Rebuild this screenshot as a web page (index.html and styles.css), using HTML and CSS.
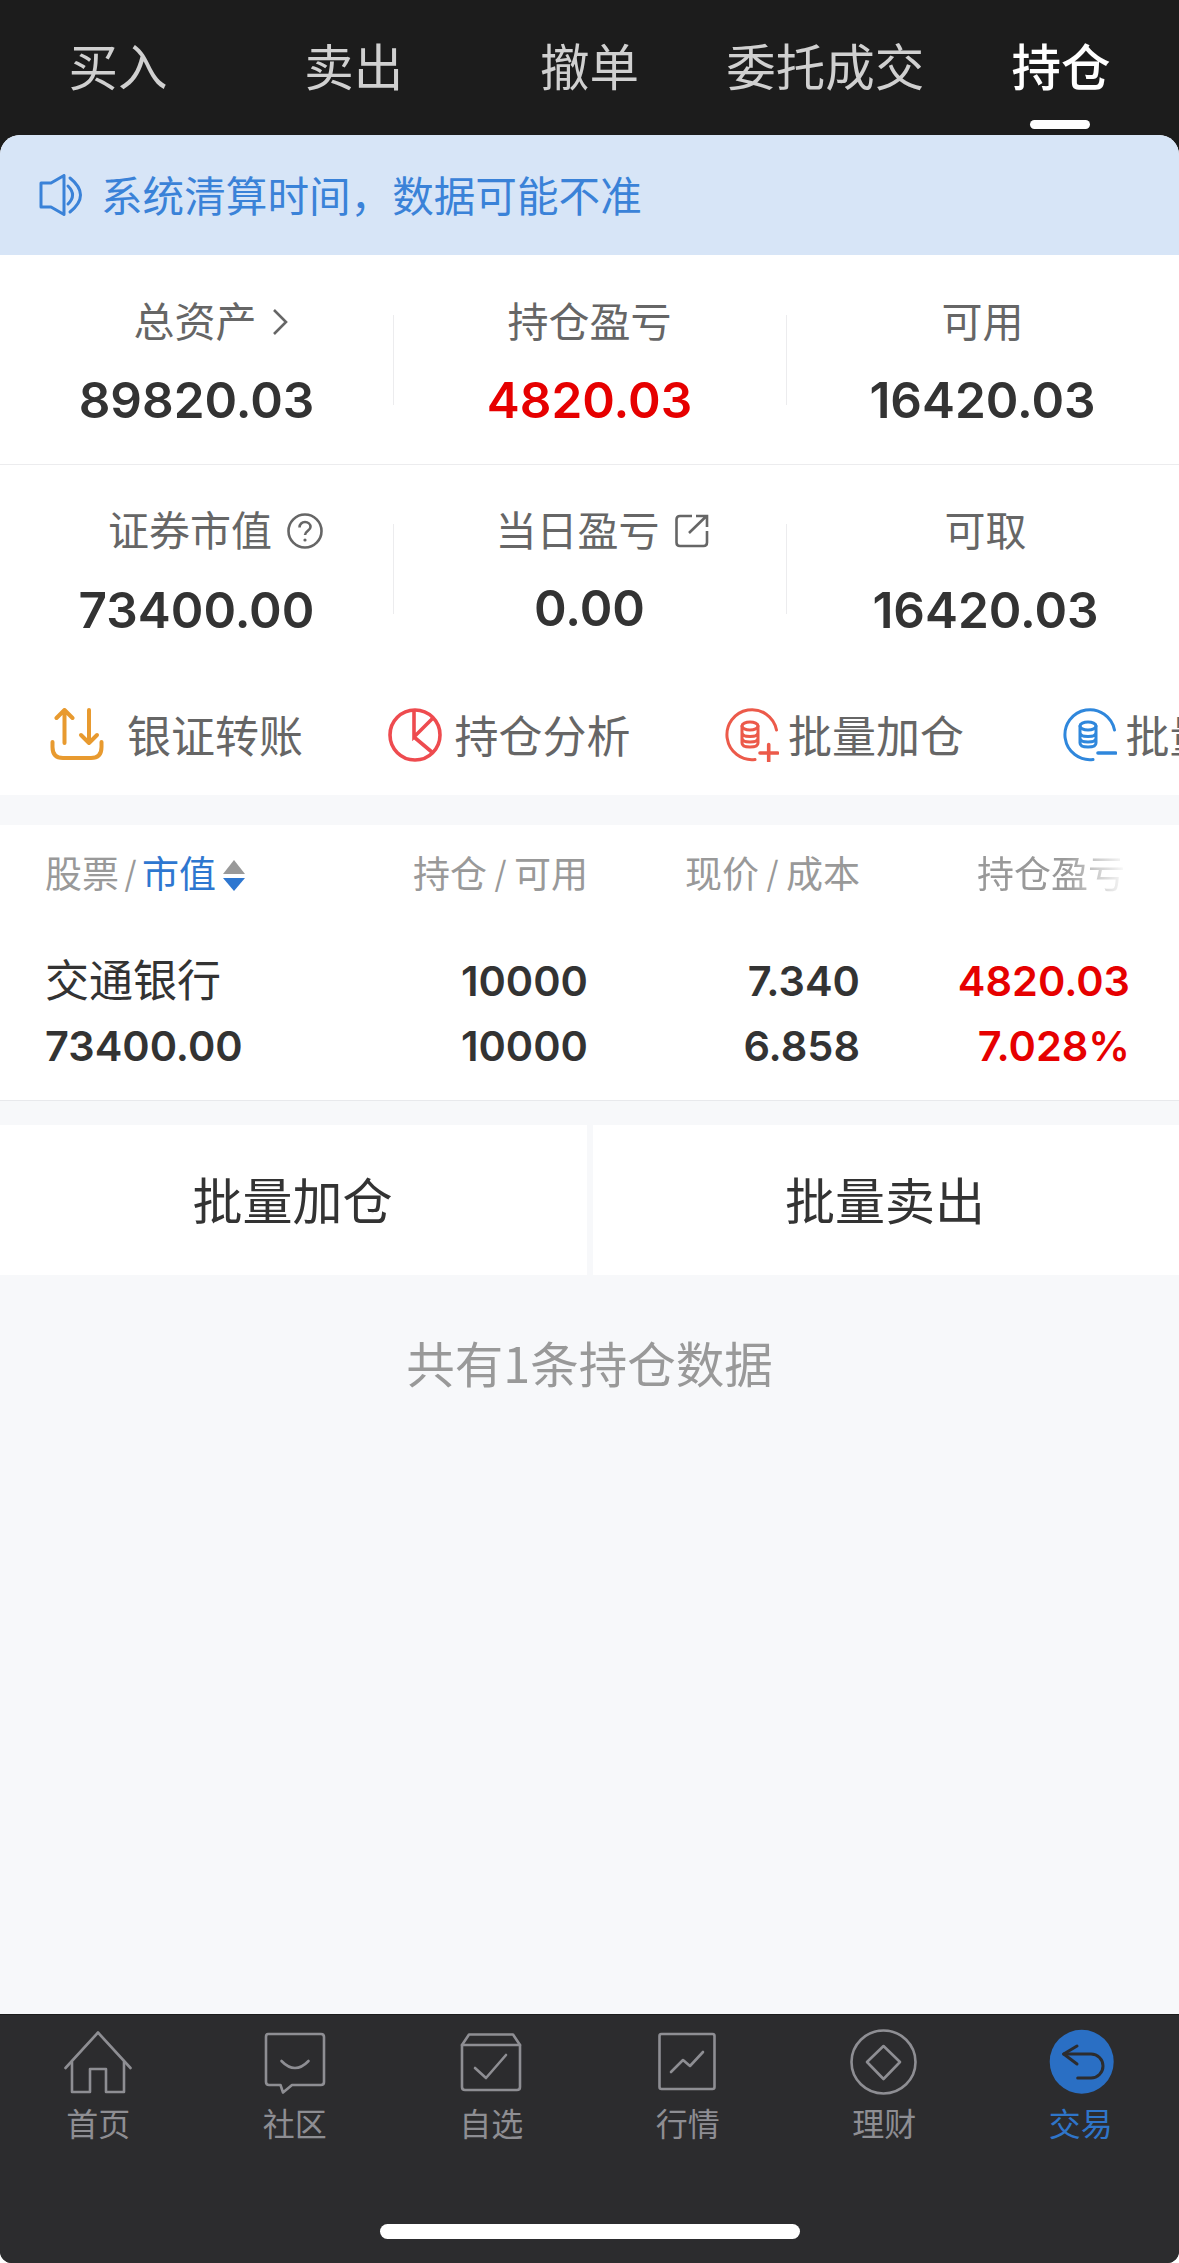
FILE: index.html
```html
<!DOCTYPE html>
<html lang="zh-CN">
<head>
    <meta charset="UTF-8">
    <meta name="viewport" content="width=device-width, initial-scale=1.0">
    <title>持仓</title>
    <link rel="stylesheet" href="styles.css">
</head>
<body>
    <div class="app">
        <nav class="top-tabs">
            <span class="top-tab">买入</span>
            <span class="top-tab">卖出</span>
            <span class="top-tab">撤单</span>
            <span class="top-tab">委托成交</span>
            <span class="top-tab active">持仓</span>
        </nav>

        <main class="content">
            <div class="notice">
                <svg class="notice-icon" viewBox="0 0 44 42" fill="none" stroke="#3a82d8" stroke-width="3" stroke-linejoin="round" stroke-linecap="round">
                    <path d="M2 9H12L25 1.500V40.500L12 33H2Z"/>
                    <path d="M29 12Q38 21 29 30"/>
                    <path d="M31 4Q52 21 31 38"/>
                </svg>
                <span>系统清算时间，数据可能不准</span>
            </div>

            <section class="stats">
                <div class="stat-row">
                    <div class="stat">
                        <div class="stat-label shift-a">总资产
                            <svg class="chev" viewBox="0 0 16 28" fill="none" stroke="#666" stroke-width="2.6"><path d="M2 2L14 14L2 26"/></svg>
                        </div>
                        <div class="stat-value">89820.03</div>
                    </div>
                    <div class="stat">
                        <div class="stat-label">持仓盈亏</div>
                        <div class="stat-value red">4820.03</div>
                    </div>
                    <div class="stat">
                        <div class="stat-label">可用</div>
                        <div class="stat-value">16420.03</div>
                    </div>
                </div>
                <div class="stat-row second">
                    <div class="stat">
                        <div class="stat-label shift-b">证券市值
                            <svg class="help" viewBox="0 0 36 36" fill="none" stroke="#666" stroke-width="2.6">
                                <circle cx="18" cy="18" r="16.500"/>
                                <path d="M12.500 14.500C12.500 11 15 9 18 9C21 9 23.500 11 23.500 14C23.500 17.500 18 18 18 22"/>
                                <circle cx="18" cy="27" r="1.600" fill="#666" stroke="none"/>
                            </svg>
                        </div>
                        <div class="stat-value">73400.00</div>
                    </div>
                    <div class="stat">
                        <div class="stat-label shift-c">当日盈亏
                            <svg class="ext" viewBox="0 0 34 34" fill="none" stroke="#666" stroke-width="2.6">
                                <path d="M17 2H5Q1.500 2 1.500 5.500V28.500Q1.500 32 5 32H28.500Q32 32 32 28.500V17"/>
                                <path d="M14 19L31 2.500M21 2H32V13"/>
                            </svg>
                        </div>
                        <div class="stat-value raised">0.00</div>
                    </div>
                    <div class="stat last-b">
                        <div class="stat-label">可取</div>
                        <div class="stat-value">16420.03</div>
                    </div>
                </div>
            </section>

            <div class="actions">
                <div class="action action-transfer">
                    <svg class="action-icon" viewBox="0 0 54 54" fill="none" stroke="#e89a2f" stroke-width="4" stroke-linecap="round" stroke-linejoin="round">
                        <path d="M14.500 35V2M6.500 10L14.500 2L22.500 10"/>
                        <path d="M39 2V35M31 27L39 35L47 27"/>
                        <path d="M2.500 34V39Q2.500 50 13 50H41Q51.500 50 51.500 39V34"/>
                    </svg>
                    <span>银证转账</span>
                </div>
                <div class="action action-analysis">
                    <svg class="action-icon" viewBox="0 0 54 54" fill="none" stroke="#ee4b4f" stroke-width="3.600">
                        <circle cx="27" cy="27" r="25"/>
                        <path d="M26 3V29L45 10M26 29L45 45"/>
                    </svg>
                    <span>持仓分析</span>
                </div>
                <div class="action action-add">
                    <svg class="action-icon" viewBox="0 0 54 54" fill="none" stroke="#ec5a4a" stroke-width="3" stroke-linecap="round">
                        <path d="M51.500 22A25 25 0 1 0 30 51.500"/>
                        <ellipse cx="25" cy="18" rx="8" ry="4"/>
                        <path d="M17 18V35Q17 39 25 39Q33 39 33 35V18M17 24.500Q17 28.500 25 28.500Q33 28.500 33 24.500M17 30Q17 34 25 34Q33 34 33 30"/>
                        <path d="M35 45H52.500M43.700 36.500V53.500" stroke-width="3.600"/>
                    </svg>
                    <span>批量加仓</span>
                </div>
                <div class="action action-reduce">
                    <svg class="action-icon" viewBox="0 0 54 54" fill="none" stroke="#2f87dc" stroke-width="3" stroke-linecap="round">
                        <path d="M51.500 22A25 25 0 1 0 30 51.500"/>
                        <ellipse cx="25" cy="18" rx="8" ry="4"/>
                        <path d="M17 18V35Q17 39 25 39Q33 39 33 35V18M17 24.500Q17 28.500 25 28.500Q33 28.500 33 24.500M17 30Q17 34 25 34Q33 34 33 30"/>
                        <path d="M35 45H52.500" stroke-width="3.600"/>
                    </svg>
                    <span>批量减仓</span>
                </div>
            </div>

            <section class="holdings">
                <div class="holdings-head">
                    <div class="col-name head-name">股票<span class="slash slash-tight">/</span><span class="sort-key">市值</span><span class="sort-arrows"><i class="arrow-up"></i><i class="arrow-down"></i></span></div>
                    <div class="col-num">持仓<span class="slash">/</span>可用</div>
                    <div class="col-num">现价<span class="slash">/</span>成本</div>
                    <div class="col-num col-fade">持仓盈亏</div>
                </div>
                <div class="holdings-row">
                    <div class="col-name stock-name">交通银行</div>
                    <div class="col-num">10000</div>
                    <div class="col-num">7.340</div>
                    <div class="col-num red">4820.03</div>
                </div>
                <div class="holdings-row">
                    <div class="col-name">73400.00</div>
                    <div class="col-num">10000</div>
                    <div class="col-num">6.858</div>
                    <div class="col-num red">7.028%</div>
                </div>
            </section>

            <div class="batch-btns">
                <div class="batch-btn">批量加仓</div>
                <div class="batch-btn">批量卖出</div>
            </div>

            <p class="count-note">共有1条持仓数据</p>
        </main>

        <nav class="tabbar">
            <div class="tabbar-items">
                <div class="tab">
                    <svg class="tab-icon" viewBox="0 0 68 66" fill="none" stroke="#8e8e93" stroke-width="2.600" stroke-linejoin="round" stroke-linecap="round">
                        <path d="M1.500 39L34 3.500L66.500 39"/>
                        <path d="M8 33V63H26V40H42V63H60V33"/>
                    </svg>
                    <span>首页</span>
                </div>
                <div class="tab">
                    <svg class="tab-icon" viewBox="0 0 68 66" fill="none" stroke="#8e8e93" stroke-width="2.600" stroke-linejoin="round" stroke-linecap="round">
                        <path d="M7 5H60Q63 5 63 8V53Q63 56 60 56H31L22 63.500L19.500 56H8Q5 56 5 53V8Q5 5 7 5Z"/>
                        <path d="M20.500 32Q34 46 47.500 32"/>
                    </svg>
                    <span>社区</span>
                </div>
                <div class="tab">
                    <svg class="tab-icon" viewBox="0 0 68 66" fill="none" stroke="#8e8e93" stroke-width="2.600" stroke-linejoin="round" stroke-linecap="round">
                        <path d="M5 16V58Q5 61 8 61H60Q63 61 63 58V16Z"/>
                        <path d="M5 16L12 5.500H56L63 16"/>
                        <path d="M18 39L29 49L49 26"/>
                    </svg>
                    <span>自选</span>
                </div>
                <div class="tab">
                    <svg class="tab-icon" viewBox="0 0 68 66" fill="none" stroke="#8e8e93" stroke-width="2.600" stroke-linejoin="round" stroke-linecap="round">
                        <rect x="5.500" y="5" width="55" height="55" rx="2"/>
                        <path d="M17 43L29 31L36 37L49 23"/>
                    </svg>
                    <span>行情</span>
                </div>
                <div class="tab">
                    <svg class="tab-icon" viewBox="0 0 68 66" fill="none" stroke="#8e8e93" stroke-width="2.600" stroke-linejoin="round">
                        <ellipse cx="33.500" cy="33" rx="32" ry="31.500"/>
                        <path d="M33.500 17L50 33L33.500 50L17 33Z"/>
                    </svg>
                    <span>理财</span>
                </div>
                <div class="tab tab-active">
                    <svg class="tab-icon" viewBox="0 0 68 66" fill="none" stroke="#2c2c2e" stroke-width="3" stroke-linecap="round" stroke-linejoin="round">
                        <ellipse cx="34.700" cy="32.700" rx="32" ry="32" fill="#2a6fc4" stroke="none"/>
                        <path d="M30 17L16.700 25L30 35"/>
                        <path d="M16.700 25H44A12 12 0 0 1 44 49H30.700"/>
                    </svg>
                    <span>交易</span>
                </div>
            </div>
            <div class="home-bar"></div>
        </nav>
    </div>
</body>
</html>
```
FILE: styles.css
```css
* {
    box-sizing: border-box;
}
html, body {
    margin: 0;
    background: #fff;
}
body {
    font-family: Inter, "Noto Sans CJK SC", sans-serif;
    color: #333;
}
.app {
    width: 1179px;
    height: 2263px;
    display: flex;
    flex-direction: column;
    overflow: hidden;
    background: #1c1c1c;
    border-radius: 0 0 12px 12px;
}
.red {
    color: #e60000;
}

/* top tabs */
.top-tabs {
    display: flex;
    height: 135px;
    padding-top: 32px;
    background: #1c1c1c;
    flex: none;
}
.top-tab {
    flex: 1;
    height: 103px;
    text-align: center;
    font-size: 49.500px;
    line-height: 72px;
    color: #d0d0d0;
    position: relative;
}
.top-tab.active {
    color: #fff;
    font-weight: 500;
}
.top-tab.active::after {
    content: "";
    position: absolute;
    left: 87px;
    bottom: 6px;
    width: 60px;
    height: 9px;
    border-radius: 5px;
    background: #fff;
}

.content {
    flex: 1;
    display: flex;
    flex-direction: column;
    background: #f7f8fa;
    border-radius: 20px 20px 0 0;
    overflow: hidden;
}

/* notice */
.notice {
    height: 120px;
    flex: none;
    display: flex;
    align-items: center;
    gap: 18px;
    padding-left: 39px;
    background: #d7e5f7;
    color: #3a82d8;
    font-size: 41.600px;
}
.notice span {
    margin-bottom: 3px;
}
.notice-icon {
    width: 44px;
    height: 42px;
}

/* stats */
.stats {
    background: #fff;
    flex: none;
}
.stat-row {
    display: grid;
    grid-template-columns: repeat(3, 393px);
    height: 210px;
    padding-top: 39px;
    border-bottom: 1px solid #ececee;
}
.stat-row.second {
    height: 210px;
    padding-top: 38px;
    border-bottom: none;
}
.stat {
    position: relative;
    text-align: center;
}
.stat + .stat::before {
    content: "";
    position: absolute;
    left: 0;
    top: 21px;
    width: 1px;
    height: 90px;
    background: #ececee;
}
.last-b {
    padding-left: 6px;
}
.stat-label {
    display: flex;
    justify-content: center;
    align-items: center;
    gap: 15px;
    height: 56px;
    font-size: 41px;
    line-height: 56px;
    color: #666;
}
.stat-value {
    margin-top: 20px;
    font-size: 49.500px;
    line-height: 60px;
    font-weight: 600;
}
.second .stat-value {
    margin-top: 21px;
}
.second .stat-value.raised {
    margin-top: 19px;
}
.shift-a {
    padding-left: 28px;
}
.shift-b {
    padding-left: 38px;
}
.shift-c {
    padding-left: 25px;
}
.chev {
    width: 16px;
    height: 28px;
}
.help {
    width: 36px;
    height: 36px;
}
.ext {
    width: 34px;
    height: 34px;
}

/* actions row */
.actions {
    display: flex;
    align-items: center;
    height: 120px;
    flex: none;
    padding-left: 50px;
    margin-bottom: 30px;
    background: #fff;
    font-size: 44px;
    color: #666;
    white-space: nowrap;
    overflow: hidden;
}
.action {
    display: flex;
    align-items: center;
    flex: none;
    width: 337.500px;
}
.action span {
    margin-bottom: 3px;
}
.action-icon {
    width: 54px;
    height: 54px;
    flex: none;
}
.action-transfer {
    gap: 23px;
}
.action-analysis {
    gap: 13px;
}
.action-add,
.action-reduce {
    gap: 9px;
}

/* holdings table */
.holdings {
    flex: none;
    height: 276px;
    padding: 25px 0 0 45px;
    background: #fff;
    border-bottom: 1px solid #e8e9ec;
}
.holdings-head,
.holdings-row {
    display: grid;
    grid-template-columns: 300px 243px 272px 270px;
    white-space: nowrap;
}
.holdings-head {
    height: 50px;
    margin-bottom: 49px;
    font-size: 37px;
    line-height: 50px;
    color: #999;
}
.holdings-row {
    height: 65px;
    font-size: 41.500px;
    line-height: 65px;
    font-weight: 600;
}
.col-num {
    text-align: right;
}
.head-name {
    display: flex;
    align-items: center;
}
.stock-name {
    font-size: 44px;
    font-weight: 400;
}
.slash {
    margin: 0 7px;
    font-weight: 300;
}
.slash-tight {
    margin: 0 5px;
}
.sort-key {
    color: #2e77d0;
}
.sort-arrows {
    display: flex;
    flex-direction: column;
    gap: 4px;
    margin-left: 7px;
}
.arrow-up {
    border: 11px solid transparent;
    border-top: 0;
    border-bottom: 14px solid #999;
}
.arrow-down {
    border: 11px solid transparent;
    border-bottom: 0;
    border-top: 13px solid #2e77d0;
}
.col-fade {
    padding-right: 5px;
    -webkit-mask-image: linear-gradient(90deg, #000 205px, transparent 268px);
    mask-image: linear-gradient(90deg, #000 205px, transparent 268px);
}

/* batch buttons */
.batch-btns {
    display: grid;
    grid-template-columns: 587px 586px;
    gap: 6px;
    margin-top: 24px;
    flex: none;
}
.batch-btn {
    height: 150px;
    padding-right: 2px;
    background: #fff;
    text-align: center;
    font-size: 50px;
    line-height: 154px;
    color: #333;
}

.count-note {
    margin: 57px 0 0;
    text-align: center;
    font-family: "Noto Sans CJK SC", sans-serif;
    font-size: 48.500px;
    line-height: 60px;
    color: #999;
}

/* bottom tab bar */
.tabbar {
    height: 249px;
    flex: none;
    background: #2c2c2e;
    border-top: 1px solid #1c1c1c;
}
.tabbar-items {
    display: flex;
    height: 209px;
    padding-top: 14px;
}
.tab {
    flex: 1;
    display: flex;
    flex-direction: column;
    align-items: center;
    font-size: 32px;
    line-height: 44px;
    color: #8e8e93;
}
.tab-icon {
    width: 68px;
    height: 66px;
    margin-bottom: 8px;
}
.tab-active {
    color: #2f75c9;
}
.home-bar {
    width: 420px;
    height: 15px;
    margin: 0 auto;
    border-radius: 8px;
    background: #fff;
}
```
